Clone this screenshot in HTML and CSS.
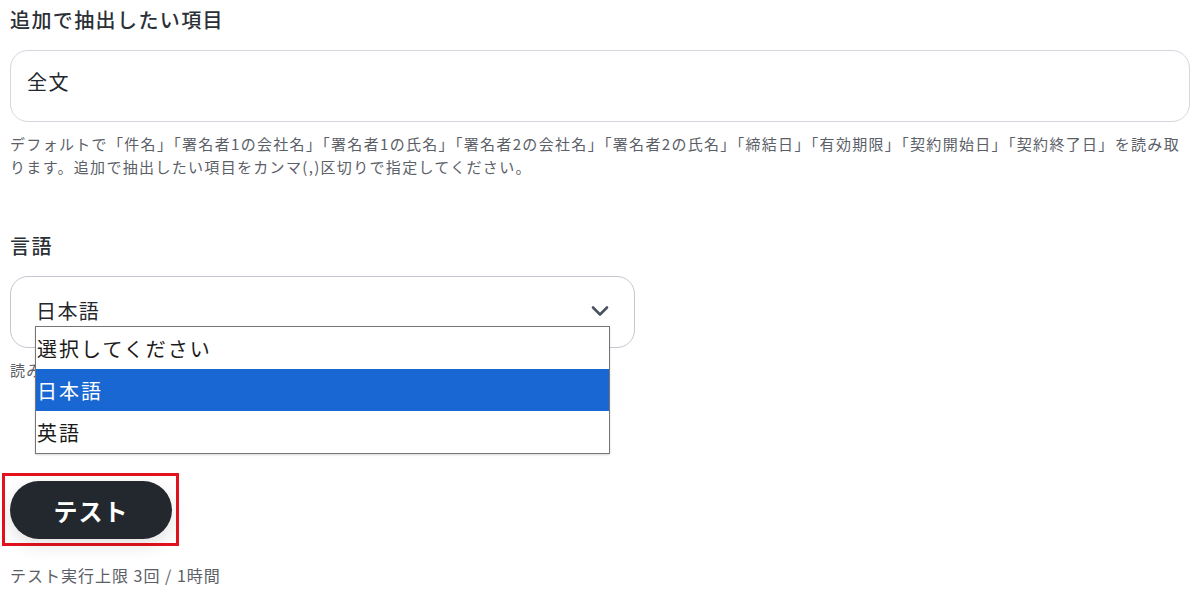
FILE: index.html
```html
<!DOCTYPE html>
<html lang="ja">
<head>
<meta charset="utf-8">
<link rel="stylesheet" href="styles.css">
</head>
<body>
<div class="page">
  <section class="field">
    <div class="field-label">追加で抽出したい項目</div>
    <div class="text-input">全文</div>
    <p class="help">デフォルトで「件名」「署名者1の会社名」「署名者1の氏名」「署名者2の会社名」「署名者2の氏名」「締結日」「有効期限」「契約開始日」「契約終了日」を読み取ります。追加で抽出したい項目をカンマ(,)区切りで指定してください。</p>
  </section>
  <section class="field lang">
    <div class="field-label">言語</div>
    <div class="select-wrap">
      <div class="select">
        <span>日本語</span>
        <svg class="chevron" width="18" height="12" viewBox="0 0 18 12"><path d="M2 2.5 L9 9.5 L16 2.5" fill="none" stroke="#4b5260" stroke-width="2.6" stroke-linecap="round" stroke-linejoin="round"/></svg>
      </div>
      <ul class="dropdown">
        <li>選択してください</li>
        <li class="selected">日本語</li>
        <li>英語</li>
      </ul>
    </div>
    <p class="help">読み取る言語を選択してください。</p>
  </section>
  <div class="actions">
    <div class="highlight"><button class="test-btn">テスト</button></div>
    <p class="limit">テスト実行上限 3回 / 1時間</p>
  </div>
</div>
</body>
</html>
```
FILE: styles.css
```css
* { box-sizing: border-box; }
html, body { margin: 0; padding: 0; background: #fff; }
body {
  font-family: "Noto Sans CJK JP", "Noto Sans", sans-serif;
  color: #2b2f36;
}
.page {
  padding: 5px 10px 0 10px;
  display: flex;
  flex-direction: column;
}
.field { display: flex; flex-direction: column; }
.field-label {
  font-size: 20px;
  line-height: 30px;
  font-weight: 500;
  letter-spacing: 1.4px;
  color: #2b2f36;
}
.text-input {
  margin-top: 15px;
  height: 72px;
  border: 1px solid #d3d8df;
  border-radius: 18px;
  padding: 0 16px 9px 16px;
  display: flex;
  align-items: center;
  font-size: 20px;
  letter-spacing: 1.6px;
  color: #23272e;
}
.help {
  margin: 10px 0 0 0;
  font-size: 15px;
  line-height: 23px;
  color: #5b6068;
  letter-spacing: 1.32px;
}
.lang { margin-top: 53px; }
.select-wrap {
  position: relative;
  margin-top: 15px;
  width: 625px;
}
.select {
  height: 72px;
  border: 1px solid #c3c8cf;
  border-radius: 18px;
  padding: 0 25px 3px 25px;
  display: flex;
  align-items: center;
  justify-content: space-between;
  font-size: 20px;
  letter-spacing: 1.4px;
  color: #23272e;
}
.chevron { margin-top: 0; }
.dropdown {
  position: absolute;
  left: 25px;
  top: 50px;
  width: 575px;
  margin: 0;
  padding: 0;
  list-style: none;
  background: #fff;
  border: 1px solid #767676;
  box-shadow: 0 1px 2px rgba(0,0,0,0.15);
  z-index: 2;
}
.dropdown li {
  height: 42px;
  padding-left: 1px;
  display: flex;
  align-items: center;
  font-size: 20px;
  letter-spacing: 2px;
  color: #1a1a1a;
}
.dropdown li.selected {
  background: #1967d2;
  color: #fff;
}
.actions {
  margin-top: 92px;
  display: flex;
  flex-direction: column;
  align-items: flex-start;
}
.highlight {
  margin-left: -8px;
  border: 3px solid #e3121d;
  padding: 5px 4px 4px 5px;
}
.test-btn {
  width: 162px;
  height: 58px;
  border: none;
  border-radius: 29px;
  background: #23272e;
  color: #fff;
  font-family: "Noto Sans CJK JP", sans-serif;
  font-size: 24px;
  font-weight: 700;
  letter-spacing: 1px;
  box-shadow: 0 6px 18px rgba(0,0,0,0.12);
  display: block;
}
.limit {
  margin: 19px 0 0 0;
  font-size: 16px;
  line-height: 20px;
  color: #5b6068;
  letter-spacing: 1px;
}
```
